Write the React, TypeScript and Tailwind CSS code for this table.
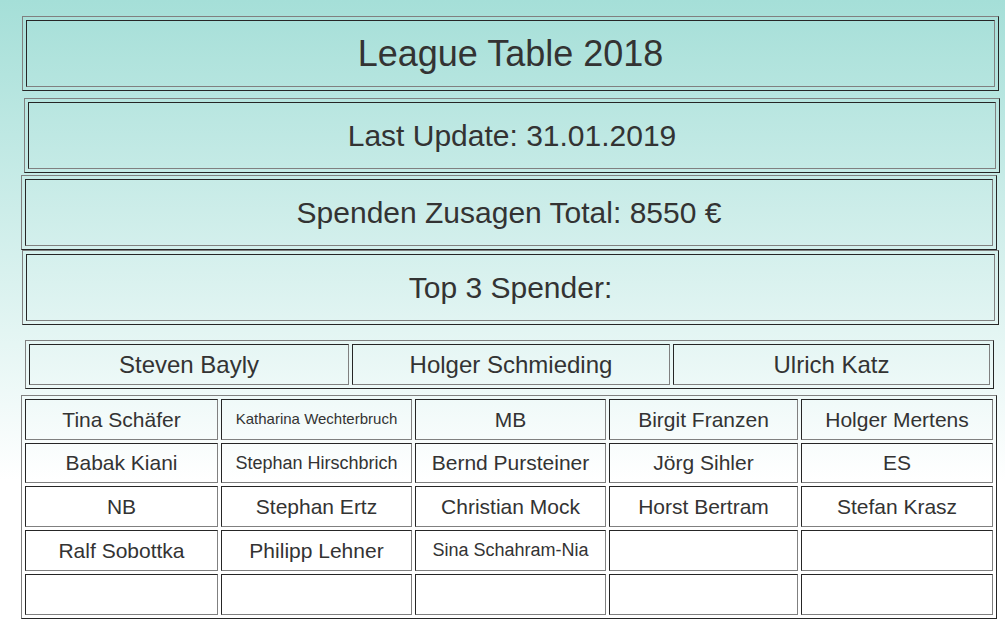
import React from "react";

const outer =
  "border border-t-[#808080] border-l-[#808080] border-b-[#262626] border-r-[#262626] p-[3px]";
const inner =
  "border border-t-[#262626] border-l-[#262626] border-b-[#808080] border-r-[#808080] flex items-center justify-center";

type Cell = { t: string; s?: string };

const grid: Cell[][] = [
  [
    { t: "Tina Schäfer" },
    { t: "Katharina Wechterbruch", s: "text-[15px]" },
    { t: "MB" },
    { t: "Birgit Franzen" },
    { t: "Holger Mertens" },
  ],
  [
    { t: "Babak Kiani" },
    { t: "Stephan Hirschbrich", s: "text-[18px]" },
    { t: "Bernd Pursteiner" },
    { t: "Jörg Sihler" },
    { t: "ES" },
  ],
  [
    { t: "NB" },
    { t: "Stephan Ertz" },
    { t: "Christian Mock" },
    { t: "Horst Bertram" },
    { t: "Stefan Krasz" },
  ],
  [
    { t: "Ralf Sobottka" },
    { t: "Philipp Lehner" },
    { t: "Sina Schahram-Nia", s: "text-[18px]" },
    { t: "" },
    { t: "" },
  ],
  [{ t: "" }, { t: "" }, { t: "" }, { t: "" }, { t: "" }],
];

function Banner({ className, text }: { className: string; text: string }) {
  return (
    <div className={`${outer} ${className} flex`}>
      <div className={`${inner} flex-1`}>{text}</div>
    </div>
  );
}

export default function App() {
  return (
    <div className="min-h-[624px] bg-[linear-gradient(180deg,#a5dfd8_0px,#ffffff_480px)] font-['Liberation_Sans',Arial,sans-serif] text-[#333333] pt-[16px] flex flex-col">
      <Banner className="ml-[22px] w-[977px] h-[75px] text-[36px]" text="League Table 2018" />
      <Banner className="ml-[24px] w-[976px] h-[75px] mt-[7px] text-[30px]" text="Last Update: 31.01.2019" />
      <Banner className="ml-[21px] w-[976px] h-[75px] mt-[2px] text-[30px]" text="Spenden Zusagen Total: 8550 €" />
      <Banner className="ml-[22px] w-[977px] h-[75px] text-[30px]" text="Top 3 Spender:" />

      <div className={`${outer} ml-[25px] w-[969px] h-[49px] mt-[15px] grid grid-cols-[320px_318px_317px] gap-[3px] text-[24px]`}>
        <div className={inner}>Steven Bayly</div>
        <div className={inner}>Holger Schmieding</div>
        <div className={inner}>Ulrich Katz</div>
      </div>

      <div className={`${outer} ml-[21px] w-[976px] mt-[6px] grid grid-cols-[193px_191px_191px_189px_192px] grid-rows-[41px_40px_41px_41px_41px] gap-[3px] text-[21px]`}>
        {grid.flat().map((c, i) => (
          <div key={i} className={`${inner} ${c.s ?? ""} whitespace-nowrap`}>
            {c.t}
          </div>
        ))}
      </div>
    </div>
  );
}
